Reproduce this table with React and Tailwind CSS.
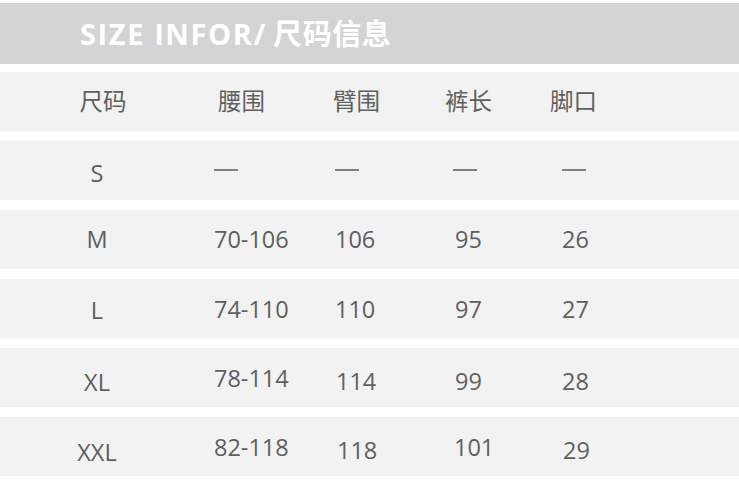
import React from 'react';

const rows = [
  [
    { t: '尺码', c: 'pl-[12px]' },
    { t: '腰围', c: 'pl-[4px]' },
    { t: '臂围', c: '-ml-[2px]' },
    { t: '裤长', c: '-ml-[6px]' },
    { t: '脚口', c: '-ml-[4px]' },
  ],
  [
    { t: 'S', c: 'pt-[6px]' },
    { t: '—', c: 'dash' },
    { t: '—', c: 'dash' },
    { t: '—', c: 'dash' },
    { t: '—', c: 'dash' },
  ],
  [
    { t: 'M', c: '' },
    { t: '70-106', c: '' },
    { t: '106', c: '' },
    { t: '95', c: 'pl-[2px]' },
    { t: '26', c: '' },
  ],
  [
    { t: 'L', c: 'pt-[5px]' },
    { t: '74-110', c: 'pt-[3px]' },
    { t: '110', c: 'pt-[3px]' },
    { t: '97', c: 'pl-[2px] pt-[3px]' },
    { t: '27', c: 'pt-[3px]' },
  ],
  [
    { t: 'XL', c: 'pt-[10px] pr-[6px]' },
    { t: '78-114', c: 'pt-[3px]' },
    { t: '114', c: 'pt-[8px] pl-[1px]' },
    { t: '99', c: 'pt-[8px] pl-[2px]' },
    { t: '28', c: 'pt-[8px]' },
  ],
  [
    { t: 'XXL', c: 'pt-[12px] pr-[6px]' },
    { t: '82-118', c: 'pt-[2px]' },
    { t: '118', c: 'pt-[8px] pl-[2px]' },
    { t: '101', c: 'pt-[2px] pl-[1px]' },
    { t: '29', c: 'pt-[9px] pl-[1px]' },
  ],
];

const widths = ['w-[214px] pr-[20px] justify-center', 'w-[121px]', 'w-[118px]', 'w-[109px]', 'flex-1'];

function Cell({ cell, w }) {
  if (cell.c === 'dash') {
    return (
      <div className={`${w} flex items-center`}>
        <span className="block h-[2px] w-[24px] bg-[#808080] mb-[2px]" />
      </div>
    );
  }
  return (
    <div className={`${w} flex items-center ${cell.c}`}>
      <span>{cell.t}</span>
    </div>
  );
}

export default function App() {
  return (
    <div className="w-[739px] h-[484px] bg-white pt-[3px] overflow-hidden font-['Open_Sans','Noto_Sans_CJK_SC',sans-serif]">
      <div className="h-[61px] bg-[#d4d4d4] flex items-center pl-[80px]">
        <h1 className="text-[29px] font-bold text-white leading-none flex items-center">
          <span className="tracking-[1.6px]">SIZE INFOR/</span>
          <span className="ml-[6px] tracking-[0.6px]">尺码信息</span>
        </h1>
      </div>
      <div className="flex flex-col gap-[10px] mt-[8px]">
        {rows.map((row, i) => (
          <div key={i} className="h-[59px] bg-[#f2f2f2] flex text-[23.5px] text-[#5f5f5f] leading-none">
            {row.map((cell, j) => (
              <Cell key={j} cell={cell} w={widths[j]} />
            ))}
          </div>
        ))}
      </div>
    </div>
  );
}
